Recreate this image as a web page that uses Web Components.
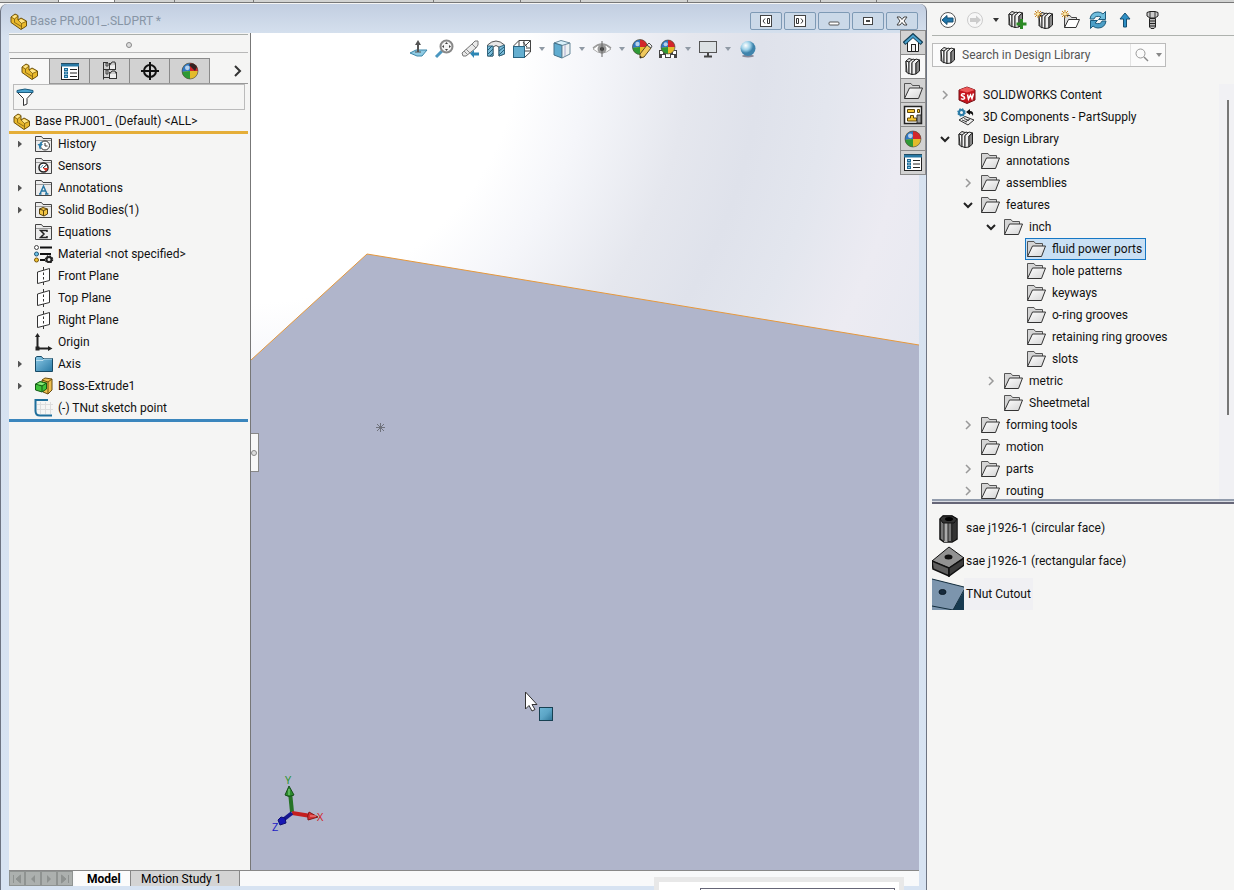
<!DOCTYPE html>
<html lang="en">
<head>
<meta charset="utf-8">
<title>Base PRJ001_.SLDPRT</title>
<style>
  html, body {
    margin: 0;
    height: 100%;
  }
  body {
    font: 12px/16px Roboto, "Open Sans", sans-serif;
    color: #111;
    background: #f5f5f4;
    overflow: hidden;
  }
</style>
</head>
<body>
<cad-app></cad-app>

<script>
const ball = (cx, cy, r) => `
  <circle cx="${cx}" cy="${cy}" r="${r}" fill="#e3bb2c"/>
  <path d="M${cx} ${cy}V${cy - r}A${r} ${r} 0 0 0 ${cx - r} ${cy + 1}Z" fill="#2f78c4"/>
  <path d="M${cx} ${cy}V${cy - r}A${r} ${r} 0 0 1 ${cx + r} ${cy}Z" fill="#d3262b"/>
  <path d="M${cx} ${cy}L${cx - r} ${cy + 1}A${r} ${r} 0 0 0 ${cx} ${cy + r}Z" fill="#2f9a35"/>
  <circle cx="${cx - r / 3}" cy="${cy - r / 2.5}" r="${r / 3.4}" fill="#fff" opacity=".65"/>
  <circle cx="${cx}" cy="${cy}" r="${r}" fill="none" stroke="#444" stroke-opacity=".6"/>`

const folderTab = `<path d="M1.5 16.500V1.500H7.500L9 3.500H17.500V16.500Z" fill="#ececec" stroke="#444"/><path d="M2 5.500H17" stroke="#999"/>`

const books = `
  <path d="M2 4L5 1.500 8 2.500V16.500L5 14.500 2 15Z" fill="#ddd" stroke="#222"/>
  <path d="M2 4L5 5V17L3 15.500Z" fill="#fff" stroke="#222"/>
  <path d="M5 5L9 2 11.500 3 8 5.500V17.500L5 16.500Z" fill="#f3f3f3" stroke="#222"/>
  <path d="M8 5.500L12 2 15.500 3 12 6V17L8 17.500Z" fill="#eee" stroke="#222"/>
  <path d="M12 6L15.500 3V14L12 17Z" fill="#888" stroke="#222"/>`

const openFolder = `
  <defs><linearGradient id="f" x1="0" y1="0" x2="1" y2="1"><stop stop-color="#fff"/><stop offset="1" stop-color="#d4d4d4"/></linearGradient></defs>
  <path d="M1.500 16.500V1.500H8L9.500 3.500H16.500V6" fill="#d5d5d5" stroke="#555"/>
  <path d="M1.500 16.500L6.500 6H19.500L15.500 16.500Z" fill="url(#f)" stroke="#333"/>`

const plane = `<path d="M3.500 5L15.500 1.500V13.500L3.500 16.500Z" fill="#fff" stroke="#333"/><path d="M9.500 0V3M9.500 5.500V8M9.500 10V12.500M9.500 15V18" stroke="#333"/>`

const propertyList = `
  <rect x="1.500" y="1.500" width="17" height="16" fill="#fff" stroke="#222"/>
  <path d="M1 3H19" stroke="#2878a4" stroke-width="3"/>
  <path d="M4 7.500H8M4 11H8M4 14.500H8" stroke="#1d6a96" stroke-width="3"/>
  <path d="M5 7.500H7M5 11H7M5 14.500H7" stroke="#8ccbe8"/>
  <path d="M10 7.500H17M10 11H17M10 14.500H17" stroke="#222"/>`

const burst = `<path d="M4 0V8M0 4H8M1 1L7 7M7 1L1 7" stroke="#c7841b"/><circle cx="4" cy="4" r="1.500" fill="#ffe9a0"/>`

// each entry: [width, height, markup]
const icons = {
  part: [18, 17, `
    <path d="M1 4L5 1 8 2.500V7L11 5 16.500 8V13L11 16.500 1 9.500Z" fill="#e9b92d" stroke="#6e520c" stroke-linejoin="round"/>
    <path d="M2 4L5 2 7.500 3 4.500 5.500ZM8.500 8L11 6 15.500 8.500 11.500 10Z" fill="#ffe588"/>
    <path d="M1 4L4.500 6 8 3M4.500 6V9.500L11.500 13.500M8 7L11.500 10.500 16 8.500M11.500 10.500V16" fill="none" stroke="#6e520c" stroke-opacity=".7"/>`],
  properties: [20, 19, propertyList],
  config: [18, 20, `
    <path d="M2.500 1V18.500M2 1.500H7M2 8.500H8M2 16.500H8" stroke="#333" fill="none"/>
    <path d="M5 2H7V5H5ZM5 9H7V13H5Z" fill="#bbb" stroke="#444"/>
    <rect x="8.500" y="2.500" width="6" height="6" fill="#eee" stroke="#333"/>
    <rect x="8.500" y="11.500" width="7" height="6" fill="#eee" stroke="#333"/>
    <path d="M8.500 4.500L11 1H14L14.500 4M8.500 13L11 10H14L15.500 13" fill="#ccc" stroke="#333"/>`],
  target: [20, 20, `<circle cx="10" cy="10" r="6" fill="none" stroke="#111" stroke-width="2"/><path d="M10 1V19M1 10H19" stroke="#111" stroke-width="2"/>`],
  display: [20, 20, ball(10, 10, 8) + `<path d="M9 4C12 1 15 3 17 6L15 10Z" fill="#332222"/>`],
  appearance: [20, 20, ball(10, 10, 8)],
  next: [10, 12, `<path d="M2 1L7 6 2 11" fill="none" stroke="#333" stroke-width="2"/>`],
  filter: [18, 18, `<path d="M1 4H17L11 10.500V16L7.500 17.500V10.500Z" fill="#fff" stroke="#333"/><path d="M1 2.500Q9 -.500 17 2.500V4.500H1Z" fill="#4aa3cf" stroke="#1d5d80"/>`],
  history: [20, 18, folderTab + `<circle cx="11" cy="10.500" r="4.500" fill="#fff" stroke="#333"/><path d="M11 8V11H13.500" fill="none" stroke="#333"/><path d="M6.500 14A5 5 0 0 1 8 7" fill="none" stroke="#2d7fae" stroke-width="1.500"/><path d="M3.500 9L9 9 6 12.500Z" fill="#2d7fae"/>`],
  sensors: [20, 18, folderTab + `<circle cx="9.500" cy="10.500" r="4.500" fill="#fff" stroke="#222" stroke-width="1.500"/><path d="M9 11L13 7.500" stroke="#222"/><path d="M9 11H14L12 14.500Z" fill="#e0372b"/><path d="M6.500 11L9 8" stroke="#4b9bc0"/>`],
  annotations: [20, 18, folderTab + `<path d="M5 15H7.500M11 15H14.500M6 15L9.500 7 13 15M7.500 12H11.500" fill="none" stroke="#2878a4" stroke-width="1.500"/>`],
  bodies: [20, 18, folderTab + `<path d="M5.500 8L9 6.500 13.500 8V13L10 15 5.500 13Z" fill="#f2c443" stroke="#5b430a"/><path d="M5.500 8L9.500 9.500 13.500 8M9.500 9.500V15" fill="none" stroke="#5b430a"/>`],
  equations: [20, 18, folderTab + `<path d="M13 9V7.500H6.500L10 11 6.500 14.500H13V13" fill="none" stroke="#222" stroke-width="1.500"/>`],
  material: [20, 18, `
    <circle cx="2.500" cy="2.500" r="2" fill="#fff" stroke="#444"/><circle cx="2.500" cy="9" r="2" fill="#6bc1e6" stroke="#225577"/><circle cx="2.500" cy="15" r="2" fill="#f1c232" stroke="#77560c"/>
    <path d="M6 2.500H18M6 9H17M6 15H11" stroke="#111" stroke-width="2"/>
    <circle cx="15" cy="14.500" r="2.500" fill="none" stroke="#222" stroke-width="2"/><circle cx="15" cy="14.500" r="3.500" fill="none" stroke="#222" stroke-width="1.500" stroke-dasharray="1.500 1.250"/>`],
  plane: [20, 18, plane],
  origin: [20, 18, `<path d="M3.500 3V15.500H15" fill="none" stroke="#222" stroke-width="2"/><path d="M3.500 0L6 4H1ZM18.500 15.500L14 13V18Z" fill="#222"/><rect x="1.500" y="13.500" width="4" height="4" fill="#222"/>`],
  axis: [20, 18, `<defs><linearGradient id="a" x2="1" y2="1"><stop stop-color="#8dcbe8"/><stop offset="1" stop-color="#2878a4"/></linearGradient></defs><path d="M1.500 16.500V2.500L3 1.500H7.500L9 3.500H18.500V16.500Z" fill="url(#a)" stroke="#174a66"/><path d="M2 5.500L9 5.500 10 4H18" stroke="#d9f0fa" fill="none" opacity=".7"/>`],
  extrude: [20, 18, `
    <path d="M8 3L11 1 18 2V13L14 17 9 15Z" fill="#eebf4d" stroke="#6b4d10"/><path d="M14 5L18 2M14 5V17M14 5L8 3" fill="none" stroke="#6b4d10"/>
    <path d="M1.500 7L6 4.500 12.500 6V12L8 15 1.500 13Z" fill="#3fc23a" stroke="#145a14"/><path d="M1.500 7L8 9 12.500 6M8 9V15" fill="none" stroke="#145a14"/><path d="M3 7L6 5.500 11 6.500 8 8Z" fill="#92ec7e"/>`],
  sketch: [20, 18, `<path d="M6.500 3V15M11.500 3V15M16.500 3V15M3 5.500H19M3 10.500H19" stroke="#ddd"/><path d="M14 1H1.500V12C1.500 15 3 16.500 6 16.500H18" fill="none" stroke="#1f6f9c" stroke-width="2"/>`],
  normal: [20, 20, `<path d="M2 14L8 11H19L14 17H9Z" fill="#8ecbe4" stroke="#3d86a8"/><path d="M10 4V13" stroke="#555" stroke-width="2"/><path d="M10 1L13 6H7Z" fill="#555"/><path d="M7 13H13" stroke="#555"/>`],
  zoomfit: [20, 20, `<path d="M2 18L8 12" stroke="#4b97c0" stroke-width="3"/><circle cx="12.500" cy="7.500" r="6" fill="#f4f4f4" stroke="#888" stroke-width="2"/><path d="M12.500 3L14 5H11ZM12.500 12L14 10H11ZM8 7.500L10 6V9ZM17 7.500L15 6V9Z" fill="#444"/>`],
  previous: [20, 20, `<path d="M2 14L12 5 15 2 18 2 18 6 16 9 6 17H3Z" fill="#e9e9e9" stroke="#777"/><path d="M12 5L16 9M4 12L8 16M6 10L10 14" stroke="#888"/><path d="M10 14.500L14 11V13.500H19V16.500H14V19Z" fill="#2d87b5"/>`],
  section: [20, 20, `<path d="M1.500 6Q10 -2 18.500 6V15L13 17V8Q10 5 7 8V17H1.500Z" fill="#e8e8e8" stroke="#555"/><path d="M1.500 7H7V17H1.500ZM13 8L18.500 6V15L13 17Z" fill="#79bbd8" stroke="#33667f"/><path d="M2 11L6 7M2 15L7 10M4 17L7 14M13 12L18 8M13 16L18 11" stroke="#235d79"/>`],
  orient: [20, 20, `<path d="M1.500 7L7 1.500H18.500V13L13 18M7 1.500V7M13 7L18.500 1.500M12 2V12M7 12H18" fill="#fff" stroke="#444"/><path d="M11 3L15 8M14 9H18" stroke="#444"/><rect x="1.500" y="7.500" width="11" height="11" fill="#65afd0" stroke="#286482"/>`],
  style: [20, 20, `<path d="M2 4L9 1.500 18 4 12 7Z" fill="#d8f0fa" stroke="#66889a"/><path d="M2 4L10 6.500V19L2 16Z" fill="#60acd0" stroke="#44718a"/><path d="M10 6.500L18 4V15L10 19Z" fill="#edf1f3" stroke="#66889a"/><path d="M13 6V17" stroke="#aac"/>`],
  hide: [22, 20, `<path d="M2 10Q11 1 20 10Q11 18 2 10Z" fill="#fff" stroke="#aaa"/><path d="M2 9Q11 1 20 9" fill="none" stroke="#999" stroke-width="1.500"/><circle cx="11" cy="10" r="4.500" fill="#999"/><circle cx="11" cy="10" r="2" fill="#333"/><path d="M11 2V18" stroke="#666"/>`],
  editlook: [22, 20, ball(9, 8, 7.5) + `<path d="M9 15L16 6 20 9 13 18 9 19Z" fill="#f0c95e" stroke="#5d4a1c"/><path d="M16 6L18 4 21 7 20 9Z" fill="#eee" stroke="#555"/><path d="M9 19V17L11 18Z" fill="#222"/>`],
  scene: [20, 20, `<path d="M1 11H19V19H1Z" fill="#444"/><path d="M2 12H5V15H2ZM8 15H12V18H8ZM15 12H18V15H15ZM4 16H7V19H4ZM13 16H16V19H13Z" fill="#fff"/>` + ball(10, 8, 7)],
  monitor: [20, 20, `<rect x="1.500" y="2.500" width="17" height="11" fill="#dce1e4" stroke="#555"/><path d="M10 14V18M6 17.500H14" stroke="#444" stroke-width="2"/>`],
  render: [20, 20, `<defs><radialGradient id="r" cx=".35" cy=".3"><stop stop-color="#fff"/><stop offset=".6" stop-color="#9bd0e8"/><stop offset="1" stop-color="#3f84ac"/></radialGradient></defs><ellipse cx="10" cy="17" rx="6" ry="1.500" fill="#889"/><circle cx="10" cy="9.500" r="7.500" fill="url(#r)"/>`],
  caret: [8, 6, `<path d="M1 1H7L4 5Z" fill="currentColor"/>`],
  home: [20, 20, `<path d="M4.500 9V18.500H15.500V9L10 4Z" fill="#fff" stroke="#222"/><rect x="8.500" y="11.500" width="4" height="7" fill="#eee" stroke="#222"/><path d="M1 10.500L10 2.500 19 10.500" fill="none" stroke="#133f56" stroke-width="4"/><path d="M2 10L10 2.750 18 10" fill="none" stroke="#4ba2cd" stroke-width="2"/>`],
  books: [18, 19, books],
  folder: [20, 18, openFolder],
  palette: [20, 20, `<rect x="1.500" y="1.500" width="17" height="17" fill="#fff" stroke="#222" stroke-width="1.500"/><path d="M4.500 4.500H11.500V7.500H4.500ZM14.500 4.500H16.500V7.500H14.500ZM7.500 10.500H10.500V13H13.500V16H4.500V13H7.500Z" fill="#f5c633" stroke="#5c450a"/><path d="M14 18V10H18V18Z" fill="#999" stroke="#333"/>`],
  back: [20, 20, `<circle cx="10" cy="10" r="7.500" fill="#fff" stroke="#555"/><path d="M4 10L9 5.500V8H15V12H9V14.500Z" fill="#1f76ab" stroke="#164e70"/>`],
  forward: [20, 20, `<circle cx="10" cy="10" r="7.500" fill="#f7f7f7" stroke="#ccc"/><path d="M16 10L11 5.500V8H5V12H11V14.500Z" fill="#ccc"/>`],
  addlib: [20, 20, books + `<path d="M14.500 9V19M9.500 14H19.500" stroke="#2b8a25" stroke-width="3"/>`],
  newlib: [20, 20, `<g transform="translate(3 1)">${books}</g>` + burst],
  newfolder: [20, 20, `<path d="M3.500 17.500V5.500H9L10.500 7.500H15.500V10" fill="#ddd" stroke="#444"/><path d="M3.500 17.500L7.500 9.500H18.500L15 17.500Z" fill="#fff" stroke="#333"/>` + burst],
  refresh: [20, 20, `<path d="M2 9Q3 2 10 2Q13 2 15 4L17.500 1.500V9.500H10.500L13 7Q7 5 6 9Z" fill="#6fbddd" stroke="#1e5c7c"/><path d="M18 11Q17 18 10 18Q7 18 5 16L2.500 18.500V10.500H9.500L7 13Q13 15 14 11Z" fill="#4c9fc7" stroke="#1e5c7c"/>`],
  up: [20, 20, `<path d="M10 3L15 9H11.500V17H8.500V9H5Z" fill="#2e8fc5" stroke="#174f70"/>`],
  bolt: [20, 20, `<path d="M5 2.500L8 1.500H13L16 2.500V6L13 8H8L5 6Z" fill="#ccc" stroke="#222"/><path d="M8 2V8M13 2V8" stroke="#333"/><path d="M7.500 8.500H13.500V17L12 18.500H9L7.500 17Z" fill="#bbb" stroke="#222"/><path d="M7 11H14M7 13.500H14M7 16H14" stroke="#222"/>`],
  search: [14, 14, `<circle cx="5.500" cy="5.500" r="4.500" fill="none" stroke="#999"/><path d="M9 9L13 13" stroke="#888" stroke-width="1.500"/>`],
  swcontent: [20, 18, `<path d="M2 4L10 1 18 4V14L10 17.500 2 14Z" fill="#c5151e" stroke="#771015"/><path d="M2 4L10 1 18 4 10 6.500Z" fill="#ee5a5a"/><path d="M8 8Q4 7 4.500 9.500Q8 10.500 7.500 12.500Q6 14 4 12.500" fill="none" stroke="#fff" stroke-width="1.500"/><path d="M10.500 8.500L11.500 13 13.500 9 15 12.500 16.500 7.500" fill="none" stroke="#fff" stroke-width="1.500"/>`],
  supply: [20, 18, `<circle cx="4.500" cy="4.500" r="2.500" fill="none" stroke="#2b7ba6" stroke-width="2"/><circle cx="4.500" cy="4.500" r="3.500" fill="none" stroke="#2b7ba6" stroke-width="1.500" stroke-dasharray="1.500 1.250"/><path d="M9 4L13 1V3Q17 3 16 8Q15 5 13 5.500V7Z" fill="#111"/><path d="M2 12L8 8.500 17 12 11 17Z" fill="#eee" stroke="#333"/><path d="M5 12L10 14M7 10.500L12 12.500M8 14L13 11" stroke="#444"/>`],
  circular: [32, 32, `
    <path d="M8 7L11 4H20L25 7V27L20 30H12L8 27Z" fill="#777" stroke="#111" stroke-width="1.500"/>
    <path d="M12 11H16V30H12Z" fill="#aaa"/><path d="M19 11L24 9V27L19 30Z" fill="#333"/>
    <path d="M8 7L11 4H20L25 7 22 11H11Z" fill="#333" stroke="#111"/><ellipse cx="17" cy="7" rx="4" ry="2" fill="#000"/><path d="M12 11V29M16 11V30M20 11V29" stroke="#222"/>`],
  rectangular: [32, 32, `
    <path d="M0 16L17 2 32 13 17 23Z" fill="#929292" stroke="#111"/><path d="M0 16L17 23V31L1 24Z" fill="#5e5e5e" stroke="#111" stroke-width="1.500"/><path d="M17 23L32 13V20L17 31Z" fill="#3c3c3c" stroke="#111" stroke-width="1.500"/><ellipse cx="16.500" cy="12" rx="4" ry="2.500" fill="#111"/>`],
  cutout: [32, 32, `<path d="M0 1L32 9V32H0Z" fill="#7c95ad"/><path d="M32 13V32H21Z" fill="#173a50"/><path d="M0 1L32 9M0 28L21 32 32 12" fill="none" stroke="#122c3c"/><ellipse cx="10.500" cy="14" rx="3.500" ry="2.500" fill="#162a3c" stroke="#0c1c28"/>`],
  panel: [14, 14, `<rect x="1.500" y="1.500" width="11" height="11" fill="#fff" stroke="#444"/><path d="M8.500 4.500H10.500V9.500H8.500ZM6 4.500L4 7 6 9.500" fill="none" stroke="#333"/>`],
  panelright: [14, 14, `<rect x="1.500" y="1.500" width="11" height="11" fill="#fff" stroke="#444"/><path d="M3.500 4.500H5.500V9.500H3.500ZM8 4.500L10 7 8 9.500" fill="none" stroke="#333"/>`],
  minimize: [12, 12, `<rect x="1" y="7" width="10" height="3" rx="1" fill="#fff" stroke="#555"/>`],
  restore: [12, 12, `<rect x="1.500" y="2.500" width="9" height="7" fill="#fff" stroke="#444"/><rect x="4.500" y="5.500" width="3" height="1" fill="#fff" stroke="#444"/>`],
  close: [12, 12, `<path d="M1 2H4L6 4.500 8 2H11L8 6 11 10H8L6 7.500 4 10H1L4 6Z" fill="#fff" stroke="#444"/>`],
  first: [10, 10, `<path d="M1.500 1V9M8.500 1V9L4 5Z" fill="#8e9290" stroke="#8e9290"/>`],
  prev: [10, 10, `<path d="M7 1V9L3 5Z" fill="#8e9290"/>`],
  play: [10, 10, `<path d="M3 1V9L7 5Z" fill="#8e9290"/>`],
  last: [10, 10, `<path d="M8.500 1V9M1.500 1V9L6 5Z" fill="#8e9290" stroke="#8e9290"/>`]
}

class CadIcon extends HTMLElement {
  constructor() {
    super()
    this.attachShadow({ mode: 'open' })
  }

  connectedCallback() {
    const [w, h, markup] = icons[this.getAttribute('name')]
    this.shadowRoot.innerHTML = `
      <style>
        :host { display: inline-flex; flex: none; }
        svg { display: block; }
      </style>
      <svg width="${w}" height="${h}" viewBox="0 0 ${w} ${h}" fill="none" aria-hidden="true">${markup}</svg>
    `
  }
}
customElements.define('cad-icon', CadIcon)

class IconButton extends HTMLElement {
  constructor() {
    super()
    this.attachShadow({ mode: 'open' })
  }

  connectedCallback() {
    this.shadowRoot.innerHTML = `
      <style>
        :host { display: flex; }
        button {
          display: flex;
          flex: 1;
          align-items: center;
          justify-content: center;
          padding: 0;
          border: 0;
          background: none;
          color: inherit;
        }
      </style>
      <button type="button" aria-label="${this.getAttribute('label')}"><cad-icon name="${this.getAttribute('icon')}"></cad-icon></button>
    `
  }
}
customElements.define('icon-button', IconButton)

const iconButton = (icon, label, cls = '') => `<icon-button class="${cls}" icon="${icon}" label="${label}"></icon-button>`

class TitleBar extends HTMLElement {
  constructor() {
    super()
    this.attachShadow({ mode: 'open' })
    this.shadowRoot.innerHTML = `
      <style>
        :host {
          display: flex;
          align-items: center;
          gap: 2px;
          padding: 5px 1px 0;
          color: #8795a5;
        }
        .title { flex: 1; }
        .box {
          width: 30px;
          height: 16px;
          border: 1px solid #7e9ab5;
          border-radius: 2px;
          background: #cbd9e8;
        }
      </style>
      <cad-icon name="part"></cad-icon>
      <span class="title"><slot></slot></span>
      ${iconButton('panel', 'Collapse left', 'box')}
      ${iconButton('panelright', 'Collapse right', 'box')}
      ${iconButton('minimize', 'Minimize', 'box')}
      ${iconButton('restore', 'Restore', 'box')}
      ${iconButton('close', 'Close', 'box')}
    `
  }
}
customElements.define('title-bar', TitleBar)

class FeatureItem extends HTMLElement {
  constructor() {
    super()
    this.attachShadow({ mode: 'open' })
  }

  connectedCallback() {
    const expander = this.hasAttribute('expandable') ? '<button type="button" aria-label="Expand"></button>' : ''
    this.shadowRoot.innerHTML = `
      <style>
        :host {
          display: grid;
          grid-template-columns: 21px 20px 1fr;
          column-gap: 4px;
          align-items: center;
          height: 22px;
          white-space: nowrap;
        }
        button {
          width: 4px;
          height: 7px;
          margin-left: 9px;
          padding: 0;
          border: 0;
          background: #555;
          clip-path: polygon(0 0, 100% 50%, 0 100%);
        }
        cad-icon { grid-column: 2; }
      </style>
      ${expander}
      <cad-icon name="${this.getAttribute('icon')}"></cad-icon>
      <span><slot></slot></span>
    `
  }
}
customElements.define('feature-item', FeatureItem)

class FeaturePanel extends HTMLElement {
  constructor() {
    super()
    this.attachShadow({ mode: 'open' })
    const rows = [
      ['history', 'History', true],
      ['sensors', 'Sensors'],
      ['annotations', 'Annotations', true],
      ['bodies', 'Solid Bodies(1)', true],
      ['equations', 'Equations'],
      ['material', 'Material &lt;not specified&gt;'],
      ['plane', 'Front Plane'],
      ['plane', 'Top Plane'],
      ['plane', 'Right Plane'],
      ['origin', 'Origin'],
      ['axis', 'Axis', true],
      ['extrude', 'Boss-Extrude1', true],
      ['sketch', '(-) TNut sketch point']
    ]
    this.shadowRoot.innerHTML = `
      <style>
        :host {
          display: block;
          padding-right: 2px;
          border-right: 1px solid #777;
          background: #f5f5f4;
        }
        .grip {
          display: grid;
          place-items: center;
          height: 14px;
          margin-top: 1px;
          border-top: 1px solid #aaaeaa;
          border-bottom: 1px solid #b8b8b8;
          padding-top: 3px;
        }
        .grip::before {
          content: "";
          width: 4px;
          height: 4px;
          border: 1px solid #888;
          border-radius: 50%;
          background: #ddd;
        }
        .tabs {
          display: flex;
          margin: 5px 0 0 1px;
          height: 26px;
          border-bottom: 1px solid #999;
          box-sizing: border-box;
        }
        .tab {
          width: 39px;
          border: 1px solid #8a8a8a;
          border-left: 0;
          border-bottom: 0;
          background: #d2d2d2;
        }
        .tab.active {
          margin-bottom: -1px;
          background: #f8f8f8;
        }
        .more {
          width: 20px;
          margin-left: auto;
        }
        .filter {
          display: flex;
          align-items: center;
          margin: 0 3px 0 4px;
          height: 24px;
          border: 1px solid #bbb;
          padding: 0 2px;
        }
        input {
          flex: 1;
          min-width: 0;
          border: 0;
          background: none;
          font: inherit;
          outline: 0;
        }
        .root {
          display: flex;
          align-items: center;
          gap: 4px;
          height: 20px;
          padding: 1px 0 0 4px;
          border-bottom: 3px solid #e5ae38;
        }
        .rows { border-bottom: 3px solid #3b86bd; margin-top: -1px; }
      </style>
      <div class="grip"></div>
      <div class="tabs">
        ${iconButton('part', 'FeatureManager', 'tab active')}
        ${iconButton('properties', 'PropertyManager', 'tab')}
        ${iconButton('config', 'ConfigurationManager', 'tab')}
        ${iconButton('target', 'DimXpertManager', 'tab')}
        ${iconButton('display', 'DisplayManager', 'tab')}
        ${iconButton('next', 'More tabs', 'more')}
      </div>
      <label class="filter"><cad-icon name="filter"></cad-icon><input type="text" aria-label="Filter"></label>
      <div class="root"><cad-icon name="part"></cad-icon><span>Base PRJ001_ (Default) &lt;ALL&gt;</span></div>
      <div class="rows">
        ${rows.map(([icon, text, open]) => `<feature-item icon="${icon}" ${open ? 'expandable' : ''}>${text}</feature-item>`).join('')}
      </div>
    `
  }
}
customElements.define('feature-panel', FeaturePanel)

class ViewToolbar extends HTMLElement {
  constructor() {
    super()
    this.attachShadow({ mode: 'open' })
    const caret = iconButton('caret', 'Options', 'caret')
    this.shadowRoot.innerHTML = `
      <style>
        :host { display: flex; justify-content: center; }
        .tool { width: 26px; height: 24px; }
        .caret { width: 14px; color: #909aa5; }
      </style>
      ${iconButton('normal', 'Normal to', 'tool')}
      ${iconButton('zoomfit', 'Zoom to fit', 'tool')}
      ${iconButton('previous', 'Previous view', 'tool')}
      ${iconButton('section', 'Section view', 'tool')}
      ${iconButton('orient', 'View orientation', 'tool')}${caret}
      ${iconButton('style', 'Display style', 'tool')}${caret}
      ${iconButton('hide', 'Hide or show', 'tool')}${caret}
      ${iconButton('editlook', 'Edit appearance', 'tool')}
      ${iconButton('scene', 'Apply scene', 'tool')}${caret}
      ${iconButton('monitor', 'View settings', 'tool')}${caret}
      ${iconButton('render', 'Render', 'tool')}
    `
  }
}
customElements.define('view-toolbar', ViewToolbar)

class GraphicsView extends HTMLElement {
  constructor() {
    super()
    this.attachShadow({ mode: 'open' })
    this.shadowRoot.innerHTML = `
      <style>
        :host {
          display: block;
          position: relative;
          overflow: hidden;
          background: radial-gradient(circle at 0 0, #fff 270px, #f5f6fa 340px, #e5e7ee 440px, #dfe2eb 510px, #e3e6ee 580px, #ecebf2 660px, #e6e8f0 760px);
        }
        svg {
          position: absolute;
          inset: 0;
          width: 100%;
          height: 100%;
        }
        text { font: 11px "Open Sans", sans-serif; }
        view-toolbar {
          position: relative;
          padding: 4px 4px 0 0;
        }
        .handle {
          position: absolute;
          left: -1px;
          top: 400px;
          width: 8px;
          height: 37px;
          padding: 0;
          border: 1px solid #888;
          border-left: 0;
          background: #f8f8f8;
          display: grid;
          place-items: center;
          box-sizing: content-box;
        }
        .handle::before {
          content: "";
          width: 4px;
          height: 4px;
          border: 1px solid #888;
          border-radius: 50%;
          background: #ddd;
        }
      </style>
      <svg viewBox="0 0 668 837" preserveAspectRatio="xMinYMin slice">
        <defs>
          <linearGradient id="sq" x2="1" y2="1"><stop stop-color="#6db6d5"/><stop offset=".5" stop-color="#5ca5c6"/><stop offset="1" stop-color="#2f7698"/></linearGradient>
        </defs>
        <path d="M0 327L116 221 668 312V837H0Z" fill="#b0b5cb"/>
        <path d="M0 327L116 221 668 312" fill="none" stroke="#e6983c"/>
        <path d="M129.500 390V399M125 394.500H134M126 391L133 398M133 391L126 398" stroke="#6f727c"/>
        <path d="M41 779L39 759" stroke="#267326" stroke-width="4"/>
        <path d="M38 753L43 762Q38 765 34 762Z" fill="#2c8c2c" stroke="#174d1b"/><path d="M38 756V762" stroke="#8be08b"/>
        <path d="M41 780L60 783" stroke="#c41e1e" stroke-width="4"/>
        <path d="M67 784L58 779Q56 783 57 787Z" fill="#d63030" stroke="#861818"/><path d="M59 783H65" stroke="#f39494"/>
        <path d="M41 780L32 787" stroke="#181890" stroke-width="4"/>
        <path d="M27 787L30 784 34 785 35 790 29 792Z" fill="#1717b4" stroke="#101070"/>
        <text x="34" y="751" fill="#279327">Y</text>
        <text x="66" y="788" fill="#d42222">X</text>
        <text x="21" y="798" fill="#2020c4">Z</text>
        <path d="M274.500 659V676L278 672.500 281 678 284 676.500 281 671.500H286Z" fill="#fff" stroke="#333"/>
        <rect x="288.500" y="674.500" width="13" height="13" fill="url(#sq)" stroke="#174052"/>
      </svg>
      <view-toolbar></view-toolbar>
      <button class="handle" type="button" aria-label="Collapse panel"></button>
    `
  }
}
customElements.define('graphics-view', GraphicsView)

class TaskTabs extends HTMLElement {
  constructor() {
    super()
    this.attachShadow({ mode: 'open' })
    this.shadowRoot.innerHTML = `
      <style>
        :host {
          display: grid;
          grid-auto-rows: 24px;
          width: 26px;
          border: 1px solid #8b8b8b;
          border-top: 0;
          box-sizing: border-box;
        }
        .tab { border-top: 1px solid #8b8b8b; background: #d2d2d2; }
        .active { background: #f8f8f8; }
      </style>
      ${iconButton('home', 'Resources', 'tab')}
      ${iconButton('books', 'Design Library', 'tab active')}
      ${iconButton('folder', 'File Explorer', 'tab')}
      ${iconButton('palette', 'View Palette', 'tab')}
      ${iconButton('appearance', 'Appearances', 'tab')}
      ${iconButton('properties', 'Custom Properties', 'tab')}
    `
  }
}
customElements.define('task-tabs', TaskTabs)

class StudyTabs extends HTMLElement {
  constructor() {
    super()
    this.attachShadow({ mode: 'open' })
    this.shadowRoot.innerHTML = `
      <style>
        :host {
          display: flex;
          height: 15px;
          border-top: 1px solid #888;
          background: #f8f9fa;
        }
        .nav {
          width: 14px;
          border: 1px solid #8f9391;
          background: #acb0ae;
        }
        .nav:last-of-type { margin-right: 2px; }
        button {
          min-width: 109px;
          padding: 0 8px 0 10px;
          border: 0;
          border-right: 1px solid #888;
          background: #d4d4d4;
          font: inherit;
          line-height: 14px;
          text-align: left;
        }
        button.active {
          min-width: 56px;
          padding: 0 4px 0 12px;
          background: #fbfbfb;
          font-weight: 700;
        }
      </style>
      ${iconButton('first', 'First', 'nav')}
      ${iconButton('prev', 'Previous', 'nav')}
      ${iconButton('play', 'Next', 'nav')}
      ${iconButton('last', 'Last', 'nav')}
      <button class="active" type="button">Model</button>
      <button type="button">Motion Study 1</button>
    `
  }
}
customElements.define('study-tabs', StudyTabs)

class LibraryItem extends HTMLElement {
  constructor() {
    super()
    this.attachShadow({ mode: 'open' })
  }

  connectedCallback() {
    const state = this.getAttribute('state')
    const paths = { open: 'M1 3L5 7 9 3', closed: 'M3 1L7 5 3 9' }
    const expander = paths[state] ? `
      <button type="button" class="${state}" aria-label="Toggle">
        <svg width="10" height="10" viewBox="0 0 10 10"><path d="${paths[state]}" fill="none" stroke="currentColor" stroke-width="${state === 'open' ? 2 : 1.5}"/></svg>
      </button>` : ''
    this.shadowRoot.innerHTML = `
      <style>
        :host {
          display: grid;
          grid-template-columns: 24px auto;
          justify-content: start;
          height: 22px;
          padding-left: calc(var(--level) * 23px);
          white-space: nowrap;
        }
        button {
          display: grid;
          place-items: center;
          padding: 0 0 0 1px;
          border: 0;
          background: none;
          color: #999;
        }
        .open { color: #222; }
        .label {
          grid-column: 2;
          display: flex;
          align-items: center;
          gap: 6px;
          padding: 0 3px 0 0;
          border: 1px solid transparent;
        }
        cad-icon { width: 20px; }
        :host([selected]) .label {
          border-color: #1677c4;
          background: #c9e0f4;
        }
      </style>
      ${expander}
      <span class="label"><cad-icon name="${this.getAttribute('icon')}"></cad-icon><slot></slot></span>
    `
  }
}
customElements.define('library-item', LibraryItem)

class LibraryPane extends HTMLElement {
  constructor() {
    super()
    this.attachShadow({ mode: 'open' })
    // level, text, state, icon
    const rows = [
      [0, 'SOLIDWORKS Content', 'closed', 'swcontent'],
      [0, '3D Components - PartSupply', '', 'supply'],
      [0, 'Design Library', 'open', 'books'],
      [1, 'annotations'],
      [1, 'assemblies', 'closed'],
      [1, 'features', 'open'],
      [2, 'inch', 'open'],
      [3, 'fluid power ports'],
      [3, 'hole patterns'],
      [3, 'keyways'],
      [3, 'o-ring grooves'],
      [3, 'retaining ring grooves'],
      [3, 'slots'],
      [2, 'metric', 'closed'],
      [2, 'Sheetmetal'],
      [1, 'forming tools', 'closed'],
      [1, 'motion'],
      [1, 'parts', 'closed'],
      [1, 'routing', 'closed']
    ]
    this.shadowRoot.innerHTML = `
      <style>
        :host {
          display: flex;
          flex-direction: column;
          min-height: 0;
          padding-left: 5px;
          background: #f5f5f4;
        }
        .tools {
          display: flex;
          height: 31px;
          flex: none;
          border-bottom: 1px solid #aeb2ae;
          padding-left: 2px;
        }
        .tool { width: 27px; }
        .caret { width: 15px; color: #333; }
        .search {
          display: flex;
          align-items: center;
          flex: none;
          width: 226px;
          height: 22px;
          margin: 7px 0 17px;
          border: 1px solid #bbb;
          background: #fbfbfb;
          padding-left: 6px;
        }
        input {
          flex: 1;
          min-width: 0;
          margin-left: 5px;
          padding: 0;
          border: 0;
          background: none;
          font: inherit;
          outline: 0;
        }
        input::placeholder { color: #555; opacity: 1; }
        .find {
          width: 22px;
          height: 22px;
          border-left: 1px solid #e3e3e3;
        }
        .drop { width: 12px; color: #888; }
        .tree {
          display: grid;
          grid-template-columns: 1fr 15px;
          flex: 0 0 415px;
          overflow: hidden;
        }
        .scroll {
          display: flex;
          justify-content: center;
          background: #f1f1f4;
          padding: 16px 0 87px 3px;
        }
        .scroll::before {
          content: "";
          width: 2px;
          background: #777;
        }
        .splitter {
          flex: none;
          border-top: 2px solid #929cac;
          border-bottom: 2px solid #666677;
          background: #dadde4;
          height: 1px;
        }
        ul {
          margin: 8px 0 0;
          padding: 0;
          list-style: none;
        }
        li {
          display: flex;
          height: 33px;
        }
        li span {
          align-self: start;
          padding: 8px 2px;
        }
        li:last-child span { background: #f0f0f3; }
      </style>
      <div class="tools">
        ${iconButton('back', 'Back', 'tool')}
        ${iconButton('forward', 'Forward', 'tool')}
        ${iconButton('caret', 'History', 'caret')}
        ${iconButton('addlib', 'Add to Library', 'tool')}
        ${iconButton('newlib', 'Add File Location', 'tool')}
        ${iconButton('newfolder', 'Create New Folder', 'tool')}
        ${iconButton('refresh', 'Refresh', 'tool')}
        ${iconButton('up', 'Up One Level', 'tool')}
        ${iconButton('bolt', 'Configure Toolbox', 'tool')}
      </div>
      <label class="search">
        <cad-icon name="books"></cad-icon>
        <input type="text" placeholder="Search in Design Library" aria-label="Search in Design Library">
        ${iconButton('search', 'Search', 'find')}
        ${iconButton('caret', 'Search options', 'drop')}
      </label>
      <div class="tree">
        <div>
          ${rows.map(([level, text, state = '', icon = 'folder']) => `<library-item style="--level: ${level}" icon="${icon}" state="${state}" ${text === 'fluid power ports' ? 'selected' : ''}>${text}</library-item>`).join('')}
        </div>
        <div class="scroll"></div>
      </div>
      <div class="splitter"></div>
      <ul>
        <li><cad-icon name="circular"></cad-icon><span>sae j1926-1 (circular face)</span></li>
        <li><cad-icon name="rectangular"></cad-icon><span>sae j1926-1 (rectangular face)</span></li>
        <li><cad-icon name="cutout"></cad-icon><span>TNut Cutout</span></li>
      </ul>
    `
  }
}
customElements.define('library-pane', LibraryPane)

class CadApp extends HTMLElement {
  constructor() {
    super()
    this.attachShadow({ mode: 'open' })
    this.shadowRoot.innerHTML = `
      <style>
        :host {
          display: grid;
          grid-template-rows: 4px minmax(0, 1fr);
          grid-template-columns: minmax(0, 1fr) 307px;
          height: 100vh;
        }
        .strip {
          grid-column: 1 / -1;
          display: grid;
          grid-template-columns: 59px 56px 60px 79px 180px 87px 60px 107px 133px 56px 1fr;
          height: 2px;
          border-bottom: 1px solid #777;
          background: #d2d3d2;
        }
        .strip i { border-right: 1px solid #777; }
        .strip i:nth-child(2) { background: #fafafa; }
        .strip i:last-child { border: 0; }
        .window {
          position: relative;
          display: grid;
          grid-template-rows: 29px minmax(0, 1fr) auto;
          grid-template-columns: 242px minmax(0, 1fr);
          padding: 0 7px 4px 8px;
          border: solid #6d7482;
          border-width: 0 1px;
          border-radius: 7px 7px 0 0;
          background: linear-gradient(#c2cee1, #d7e2ef 33px, #d7e3f2);
        }
        title-bar, study-tabs { grid-column: 1 / -1; }
        task-tabs {
          position: absolute;
          right: 0;
          top: 26px;
        }
        .popup {
          position: absolute;
          right: 22px;
          bottom: 0;
          width: 240px;
          height: 8px;
          border: 5px solid #e8e8e8;
          border-bottom: 0;
          background: #fff;
          display: flex;
          align-items: end;
          justify-content: end;
        }
        .popup::before {
          content: "";
          width: 193px;
          height: 1px;
          margin-right: 4px;
          border: 1px solid #667;
          border-bottom: 0;
        }
      </style>
      <div class="strip">${'<i></i>'.repeat(11)}</div>
      <div class="window">
        <title-bar>Base PRJ001_.SLDPRT *</title-bar>
        <feature-panel></feature-panel>
        <graphics-view></graphics-view>
        <study-tabs></study-tabs>
        <task-tabs></task-tabs>
        <div class="popup"></div>
      </div>
      <library-pane></library-pane>
    `
  }
}
customElements.define('cad-app', CadApp)
</script>
</body>
</html>
